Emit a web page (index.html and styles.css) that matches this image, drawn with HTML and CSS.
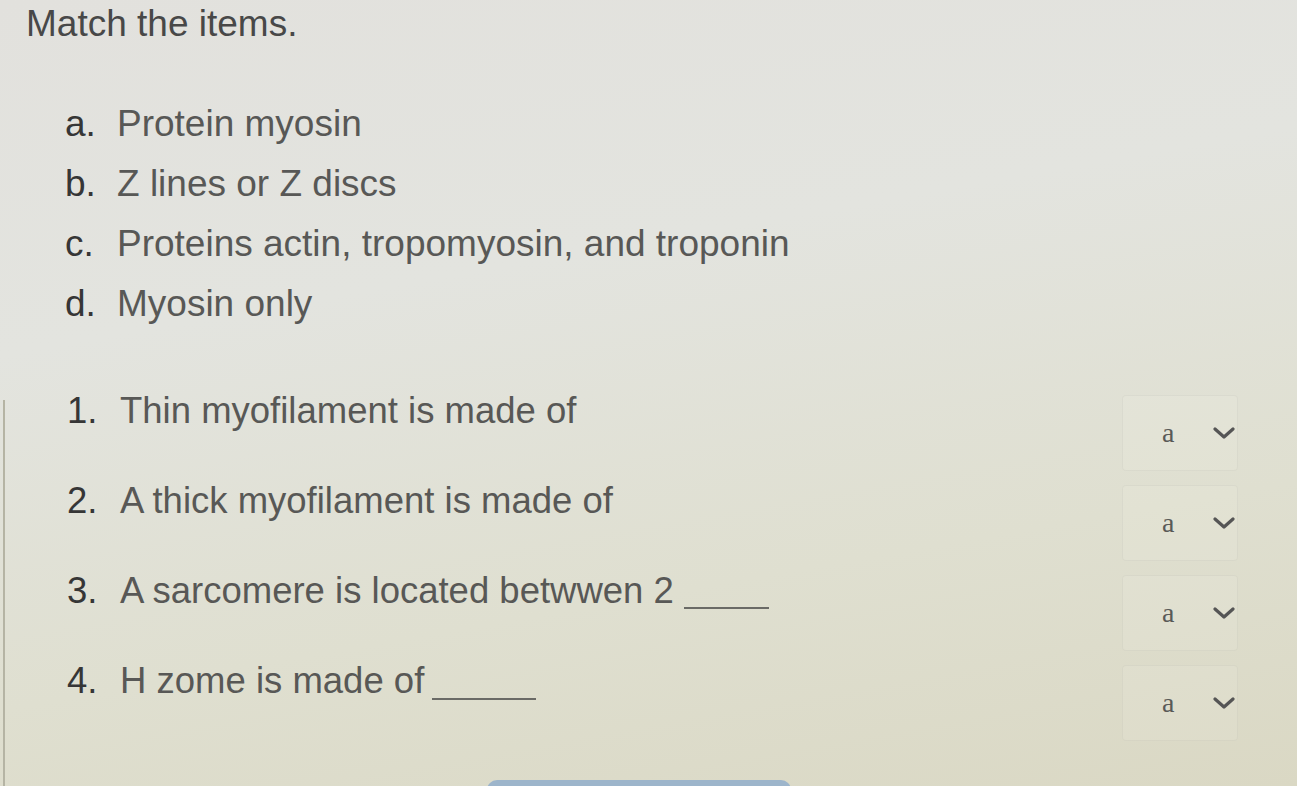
FILE: index.html
```html
<!DOCTYPE html>
<html lang="en">

<head>
  <meta charset="UTF-8">
  <meta name="viewport" content="width=device-width, initial-scale=1.0">
  <title>Match the items</title>
  <link rel="stylesheet" href="styles.css">
</head>

<body>

  <div class="page">
    <h1 class="prompt">Match the items.</h1>

    <ul class="choices">
      <li><span class="tag">a.</span>Protein myosin</li>
      <li><span class="tag">b.</span>Z lines or Z discs</li>
      <li><span class="tag">c.</span>Proteins actin, tropomyosin, and troponin</li>
      <li><span class="tag">d.</span>Myosin only</li>
    </ul>

    <ul class="questions">
      <li class="question">
        <p class="stem"><span class="tag">1.</span>Thin myofilament is made of</p>
        <div class="picker">
          <span class="picked">a</span>
          <svg class="caret" viewBox="0 0 22 12" width="22" height="12"><path d="M2 2l9 8 9-8" /></svg>
        </div>
      </li>
      <li class="question">
        <p class="stem"><span class="tag">2.</span>A thick myofilament is made of</p>
        <div class="picker">
          <span class="picked">a</span>
          <svg class="caret" viewBox="0 0 22 12" width="22" height="12"><path d="M2 2l9 8 9-8" /></svg>
        </div>
      </li>
      <li class="question">
        <p class="stem"><span class="tag">3.</span>A sarcomere is located betwwen 2<span class="blank short"></span></p>
        <div class="picker">
          <span class="picked">a</span>
          <svg class="caret" viewBox="0 0 22 12" width="22" height="12"><path d="M2 2l9 8 9-8" /></svg>
        </div>
      </li>
      <li class="question">
        <p class="stem"><span class="tag">4.</span>H zome is made of<span class="blank"></span></p>
        <div class="picker">
          <span class="picked">a</span>
          <svg class="caret" viewBox="0 0 22 12" width="22" height="12"><path d="M2 2l9 8 9-8" /></svg>
        </div>
      </li>
    </ul>

    <div class="actions">
      <button type="button" class="check-btn" aria-label="Check"></button>
    </div>
  </div>

</body>

</html>
```

FILE: styles.css
```css
html,
body {
  height: 100%;
}

body {
  font-family: "Liberation Sans", Arial, sans-serif;
  background: linear-gradient(170deg, #e2e1dd 0%, #e3e4df 35%, #dfdfd0 70%, #dad8c4 100%);
  color: #585856;
  margin: 0;
  padding: 0;
  overflow: hidden;
  position: relative;
}

/* frame edge running down the left side */
body::before {
  content: "";
  position: absolute;
  left: 3px;
  top: 400px;
  bottom: 0;
  width: 2px;
  background: #b5b4a4;
}

.page {
  padding: 0 59px 0 26px;
}

.prompt {
  margin: 2px 0 0;
  font-size: 37px;
  line-height: 44px;
  font-weight: normal;
  color: #484848;
}

.choices,
.questions {
  list-style: none;
  margin: 0;
  padding: 0 0 0 39px;
}

.choices {
  margin-top: 48px;
}

.choices li {
  font-size: 37px;
  line-height: 60px;
  white-space: nowrap;
}

.tag {
  display: inline-block;
  width: 52px;
  color: #363636;
}

.questions {
  margin-top: 56px;
}

.question {
  display: flex;
  justify-content: space-between;
  align-items: flex-start;
  height: 90px;
}

.stem {
  margin: 0;
  font-size: 36.5px;
  line-height: 42px;
  white-space: nowrap;
}

.stem .tag {
  width: 53px;
  padding-left: 2px;
}

.blank {
  display: inline-block;
  width: 104px;
  height: 0;
  margin-left: 8px;
  border-bottom: 2px solid #6a6a66;
  vertical-align: -7px;
}

.blank.short {
  width: 85px;
  margin-left: 10px;
  vertical-align: -6px;
}

.picker {
  margin-top: 5px;
  width: 116px;
  height: 76px;
  box-sizing: border-box;
  display: flex;
  align-items: center;
  padding: 0 0 0 39px;
  gap: 39px;
  border: 1px solid rgba(120, 120, 100, 0.08);
  border-radius: 4px;
  background: rgba(255, 255, 250, 0.1);
}

.picked {
  font-family: "Liberation Serif", "Times New Roman", serif;
  font-size: 28px;
  color: #5a5a58;
}

.caret path {
  fill: none;
  stroke: #555;
  stroke-width: 3.2;
  stroke-linecap: round;
  stroke-linejoin: round;
}

.actions {
  display: flex;
  justify-content: center;
  padding-left: 14px;
  margin-top: 30px;
}

.check-btn {
  width: 304px;
  height: 44px;
  border: none;
  border-radius: 10px;
  background-color: #9db5cb;
  cursor: pointer;
}
```
